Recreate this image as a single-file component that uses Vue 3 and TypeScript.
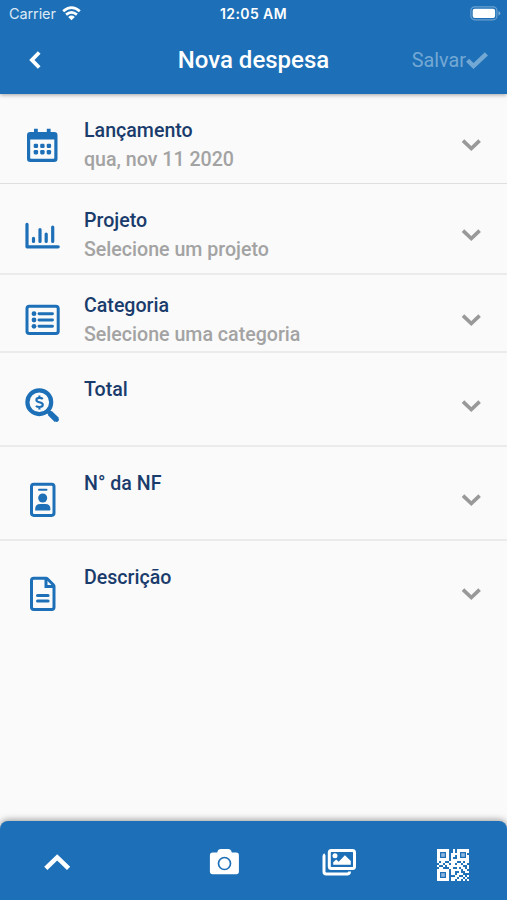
<script setup lang="ts">
interface Field {
  key: string
  label: string
  value: string
}

const fields: Field[] = [
  { key: 'date', label: 'Lançamento', value: 'qua, nov 11 2020' },
  { key: 'project', label: 'Projeto', value: 'Selecione um projeto' },
  { key: 'category', label: 'Categoria', value: 'Selecione uma categoria' },
  { key: 'total', label: 'Total', value: '' },
  { key: 'invoice', label: 'N° da NF', value: '' },
  { key: 'description', label: 'Descrição', value: '' },
]

// Light modules of the QR glyph, one string per line of the grid.
const qr: string[] = [
  '######..#.######',
  '######..#.######',
  '######.########.',
  '######.##.######',
  '######.#..######',
  '######.#########',
  '#.##..####..#.##',
  '.##.##.##.##.##.',
  '#..#.########..#',
  '.##...##..#.##.#',
  '######.#####.##.',
  '######.##..#..##',
  '######.##.###...',
  '######...##..#.#',
  '######.###.##.#.',
  '######.##.##.#.#',
]

const modules: { x: number; y: number }[] = qr.flatMap((line, y) =>
  [...line].flatMap((c, x) => (c === '#' ? [{ x, y }] : [])),
)
</script>

<template>
  <div class="screen">
    <header class="header">
      <div class="status">
        <div class="carrier">
          <span>Carrier</span>
          <svg width="19" height="15" viewBox="0 0 19 15" fill="none" stroke="#fff" stroke-width="2.7">
            <path d="M1.2 5.3Q9.5-2 17.8 5.3" />
            <path d="M4.1 8.6Q9.5 4 14.9 8.6" />
            <path d="M9.5 14.2L6.2 10.9Q9.5 8.1 12.8 10.9Z" fill="#fff" stroke="none" />
          </svg>
        </div>
        <span class="clock">12:05 AM</span>
        <svg class="battery" width="31" height="15" viewBox="0 0 31 15">
          <rect x=".9" y=".8" width="26" height="13" rx="3.8" fill="none" stroke="#6ba0d1" stroke-width="1.2" />
          <rect x="2.7" y="2.7" width="22.4" height="9.2" rx="2" fill="#fff" />
          <path d="M28.5 5v4.7q1.800-.8 1.800-2.350T28.5 5z" fill="#7fadd8" />
        </svg>
      </div>
      <div class="navbar">
        <svg class="back" width="12" height="18" viewBox="0 0 12 18" fill="none" stroke="#fff" stroke-width="3.8">
          <path d="M10.2 1.5L2.9 9l7.3 7.5" />
        </svg>
        <h1 class="title">Nova despesa</h1>
        <div class="save">
          <span>Salvar</span>
          <svg width="22" height="17" viewBox="0 0 22 17" fill="none" stroke="currentColor" stroke-width="4.4">
            <path d="M1.6 8.2l5.9 5.8L20.4 1.800" />
          </svg>
        </div>
      </div>
    </header>

    <main class="fields">
      <div v-for="f in fields" :key="f.key" class="row" :class="f.key">
        <svg class="icon" width="36" height="36" viewBox="0 0 36 36">
          <template v-if="f.key === 'date'">
            <path
              fill="currentColor"
              fill-rule="evenodd"
              d="M10 .8h3.8V4h9V.8h3.8V4h3.6q3.3 0 3.3 3.3v23.4q0 3.3-3.3 3.3H6.3Q3 34 3 30.7V7.3Q3 4 6.3 4H10zM6.2 11.5V30q0 .8.8.8h22.5q.8 0 .8-.8V11.5z"
            />
            <g fill="currentColor">
              <rect v-for="n in 6" :key="n" :x="9.7 + ((n - 1) % 3) * 6.5" :y="n > 3 ? 22 : 15.7" width="4.4" height="4.4" rx="1.3" />
            </g>
          </template>
          <g v-else-if="f.key === 'project'" fill="none" stroke="currentColor" stroke-linecap="round" stroke-width="3.2">
            <path d="M3 6.3v22.5h31.2M9.5 20.3v3.2M16 11.5v12M22.2 16v7.5M28.7 9v14.5" stroke-linejoin="round" />
          </g>
          <g v-else-if="f.key === 'category'" fill="none" stroke="currentColor" stroke-width="3">
            <rect x="3" y="4.3" width="31.2" height="27.2" rx="2.3" />
            <path d="M15 11.7h13.5M15 18h13.5M15 24.3h13.5" stroke-width="2.9" stroke-linecap="round" />
            <g fill="currentColor" stroke="none">
              <circle cx="10" cy="11.7" r="2.4" />
              <circle cx="10" cy="18" r="2.4" />
              <circle cx="10" cy="24.3" r="2.4" />
            </g>
          </g>
          <g v-else-if="f.key === 'total'" fill="none" stroke="currentColor">
            <circle cx="15.3" cy="14.2" r="11.9" stroke-width="4.200" />
            <path d="M23.8 23l8.900 8.600" stroke-width="4.5" stroke-linecap="round" />
            <path d="M25.8 25l7 6.800" stroke-width="5.800" />
            <path d="M18.8 10.900q-1-1-3.400-1-3 0-3 2.100 0 1.700 3 2.300 3.400.7 3.400 2.500 0 2.200-3.300 2.200-2.500 0-3.500-1.200M15.400 7.400v2.500M15.400 18.900v2.500" stroke-width="2.1" />
          </g>
          <g v-else-if="f.key === 'invoice'" fill="none" stroke="currentColor">
            <rect x="7.5" y="2.2" width="22.5" height="31.2" rx="2.3" stroke-width="3" />
            <path d="M15 7.7h7.5" stroke-width="2" stroke-linecap="round" />
            <circle cx="18.7" cy="16" r="4.5" fill="currentColor" stroke="none" />
            <path d="M11.2 28.5v-1.6q0-5 5-5h5.2q5 0 5 5v.6q0 1-1 1z" fill="currentColor" stroke="none" />
          </g>
          <g v-else fill="none" stroke="currentColor" stroke-width="3">
            <path d="M9.8 2.2H22q.8 0 1.3.5l6 6q.7.7.7 1.5v21q0 2.200-2.200 2.200h-18q-2.300 0-2.300-2.200V4.400q0-2.200 2.300-2.200z" />
            <path d="M22 2.2v8.3h8" />
            <path d="M13.5 19.4h10.6M13.5 25h10.6" stroke-width="3" stroke-linecap="round" />
          </g>
        </svg>
        <div class="text">
          <div class="label">{{ f.label }}</div>
          <div v-if="f.value" class="value">{{ f.value }}</div>
        </div>
        <svg class="chevron" width="20" height="14" viewBox="0 0 20 14" fill="none" stroke="#999" stroke-width="3.6">
          <path d="M2 2.6l8.3 8 8.300-8" />
        </svg>
      </div>
    </main>

    <nav class="toolbar">
      <div class="tool">
        <svg width="36" height="36" viewBox="0 0 36 36" fill="none" stroke="#fff" stroke-width="4.6">
          <path d="M6.8 23.300L18.200 12.400l11.400 10.900" />
        </svg>
      </div>
      <div class="tool">
        <svg width="36" height="36" viewBox="0 0 36 36">
          <path
            fill="#fff"
            d="M6.700 7.500h4.500l.7-2q.8-1.500 2.700-1.500h7.800q1.900 0 2.700 1.500l.7 2h4.500q2.600 0 2.600 2.700v16.400q0 2.700-2.600 2.700H6.700q-2.800 0-2.800-2.700V10.200q0-2.700 2.800-2.700z"
          />
          <circle cx="18.500" cy="18.500" r="6" fill="none" stroke="#1d70b7" stroke-width="1.700" />
        </svg>
      </div>
      <div class="tool">
        <svg width="36" height="36" viewBox="0 0 36 36" fill="none" stroke="#fff" stroke-width="3">
          <rect x="8.300" y="5.500" width="25.200" height="18" rx="2" />
          <path d="M4 9.500q-1 .5-1 2v15.200q0 2.300 2.300 2.300h21q2.100 0 2.300-2.500" />
          <circle cx="14" cy="10.800" r="2.500" fill="#fff" stroke="none" />
          <path d="M12.200 19.800v-2.500l3-2.800 2.500 2.200 6.200-6.500 5.900 5.800v3.800z" fill="#fff" stroke="none" />
        </svg>
      </div>
      <div class="tool">
        <svg class="qr" width="32" height="32" viewBox="0 0 16 16">
          <g fill="#fff">
            <rect v-for="m in modules" :key="`${m.x}-${m.y}`" :x="m.x" :y="m.y" width="1.02" height="1.02" />
          </g>
          <g fill="#8db7dc" stroke="#1d70b7" stroke-width=".6">
            <rect x="1.800" y="1.800" width="2.400" height="2.400" />
            <rect x="11.800" y="1.800" width="2.400" height="2.400" />
            <rect x="1.800" y="11.800" width="2.400" height="2.400" />
          </g>
        </svg>
      </div>
    </nav>
  </div>
</template>

<style>
body {
  margin: 0;
}
</style>

<style scoped>
.screen {
  display: flex;
  flex-direction: column;
  width: 100%;
  height: 900px;
  overflow: hidden;
  background: #fafafa;
  font-family: Roboto, sans-serif;
}
.header {
  height: 94px;
  flex: none;
  background: #1d70b7;
  color: #fff;
  box-shadow: 0 1px 4px rgba(0, 0, 0, 0.35);
}
.status {
  display: grid;
  grid-template-columns: 1fr auto 1fr;
  align-items: center;
  height: 27px;
  padding: 0 6px 0 9px;
  font: 14.5px/27px Inter, sans-serif;
}
.carrier {
  display: flex;
  align-items: center;
  gap: 6px;
  color: #dce9f5;
  letter-spacing: -0.1px;
}
.clock {
  margin-left: -3px;
  font-weight: 600;
  font-size: 14px;
  letter-spacing: 0.4px;
}
.battery {
  justify-self: end;
}
.navbar {
  display: grid;
  grid-template-columns: 1fr auto 1fr;
  align-items: center;
  height: 66px;
  padding: 0 19px;
}
.back {
  margin-left: 10px;
}
.title {
  margin: 0;
  font-size: 24px;
  font-weight: 500;
  line-height: 30px;
}
.save {
  display: flex;
  justify-content: flex-end;
  align-items: center;
  color: #74a8d4;
  font-size: 19.8px;
}
.fields {
  flex: 1;
}
.row {
  display: grid;
  grid-template-columns: 60px 1fr 20px;
  box-sizing: border-box;
  height: 94px;
  padding: 22px 26px 0 24px;
  border-bottom: 2px solid #ebebeb;
}
.row.date {
  height: 90px;
  border-bottom: 1px solid #dfdfdf;
}
.row.project {
  height: 91px;
}
.row.category {
  height: 78px;
  padding-top: 16px;
}
.row.description {
  border-bottom: 0;
}
.icon {
  margin-top: 13px;
  color: #1d70b7;
}
.chevron {
  margin-top: 24px;
}
.date .icon,
.project .icon {
  margin-top: 12px;
}
.category .icon {
  margin-top: 11px;
}
.date .chevron,
.project .chevron,
.category .chevron {
  margin-top: 22px;
}
.label,
.value {
  font-size: 19.6px;
  font-weight: 500;
  line-height: 29px;
}
.label {
  color: #1a3c6c;
}
.value {
  color: #a3a3a3;
}
.toolbar {
  display: flex;
  flex: none;
  height: 79px;
  padding-left: 39px;
  border-radius: 8px 8px 0 0;
  background: #1d70b7;
  box-shadow: 0 -1px 7px rgba(0, 0, 0, 0.4);
}
.tool {
  width: 36px;
  padding-top: 24px;
}
.tool:nth-child(2) {
  margin-left: 131px;
}
.tool:nth-child(3) {
  margin-left: 79px;
}
.tool:nth-child(4) {
  margin-left: 77px;
}
.qr {
  margin: 4px 0 0 3px;
}
</style>
